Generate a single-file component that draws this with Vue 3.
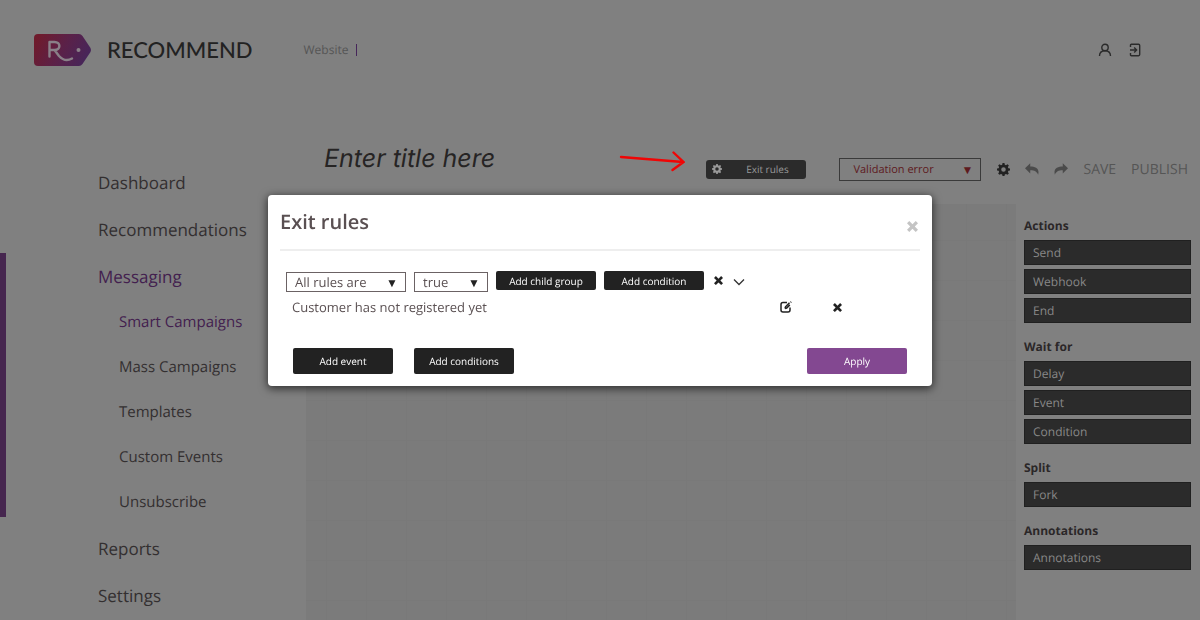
<script setup>
import { ref } from 'vue'

const title = ref('')
const match = ref('All rules are')
const truth = ref('true')
const status = ref('Validation error')

const topLinks = ['Dashboard', 'Recommendations']
const messaging = ['Smart Campaigns', 'Mass Campaigns', 'Templates', 'Custom Events', 'Unsubscribe']
const bottomLinks = ['Reports', 'Settings']

const palette = [
  { name: 'Actions', items: ['Send', 'Webhook', 'End'] },
  { name: 'Wait for', items: ['Delay', 'Event', 'Condition'] },
  { name: 'Split', items: ['Fork'] },
  { name: 'Annotations', items: ['Annotations'] },
]

const gear =
  'M6.8 0h2.4l.4 2.1 1.5.6L12.9 1.5l1.7 1.7-1.2 1.8.6 1.5 2 .4v2.300l-2 .4-.6 1.500 1.200 1.800-1.700 1.700-1.800-1.200-1.500.6-.4 2h-2.400l-.4-2-1.500-.6-1.800 1.200-1.700-1.700 1.200-1.800-.6-1.500-2-.4V6.900l2-.4.6-1.500L1.400 3.200l1.700-1.700 1.800 1.200 1.500-.6zM8 5.200a2.800 2.800 0 1 0 0 5.600 2.800 2.800 0 0 0 0-5.600z'
const cross = 'M2.500 0L6 3.500 9.500 0 12 2.500 8.500 6 12 9.500 9.500 12 6 8.500 2.500 12 0 9.500 3.500 6 0 2.500z'
</script>

<template>
  <div class="page">
    <header class="header">
      <a class="brand" href="#" aria-label="Recommend home">
        <svg class="logo" viewBox="0 0 58 32" aria-hidden="true">
          <defs>
            <linearGradient id="tag" x1="0" y1="0.300" x2="1" y2="0.600">
              <stop offset="0" stop-color="#6f1b2c" />
              <stop offset="0.500" stop-color="#5b2148" />
              <stop offset="1" stop-color="#46265a" />
            </linearGradient>
          </defs>
          <path d="M4 0H45Q47 0 48.500 2L56.500 14Q57.500 16 56.500 18L48.500 30Q47 32 45 32H4Q0 32 0 28V4Q0 0 4 0Z" fill="url(#tag)" />
          <path d="M15.500 22.500V8H20.500C27 8 27 16 20.500 16H15.500M20.500 16L25 22Q31 28.500 38 24.500" fill="none" stroke="#8a8088" stroke-width="2.400" stroke-linecap="round" stroke-linejoin="round" />
          <circle cx="44.500" cy="16" r="2" fill="#8a8088" />
        </svg>
        <span class="wordmark">RECOMMEND</span>
      </a>
      <span class="website">Website</span>
      <nav class="account" aria-label="Account">
        <button type="button" aria-label="Profile">
          <svg viewBox="0 0 14 14" class="line-icon"><circle cx="7" cy="4.500" r="3.200" /><path d="M1.500 13C1.500 9.500 4 7.700 7 7.700S12.500 9.500 12.500 13" /></svg>
        </button>
        <button type="button" aria-label="Sign out">
          <svg viewBox="0 0 14 14" class="line-icon"><path d="M2.500 4V2.200Q2.500 1.300 3.400 1.300H10.600Q11.700 1.300 11.700 2.400V11.600Q11.700 12.700 10.600 12.700H3.400Q2.500 12.700 2.500 11.800V10M2 7H8.500M6.200 4.600L8.600 7L6.200 9.400" /></svg>
        </button>
      </nav>
    </header>

    <div class="body">
      <nav class="sidebar" aria-label="Main">
        <a v-for="l in topLinks" :key="l" class="link" href="#">{{ l }}</a>
        <div class="group">
          <a class="link active" href="#">Messaging</a>
          <a v-for="(l, i) in messaging" :key="l" class="link sub" :class="{ active: i === 0 }" href="#">{{ l }}</a>
        </div>
        <a v-for="l in bottomLinks" :key="l" class="link" href="#">{{ l }}</a>
      </nav>

      <main class="main">
        <div class="toolbar">
          <input v-model="title" class="title" type="text" placeholder="Enter title here" aria-label="Title" />
          <svg class="pointer" viewBox="0 0 66 22" aria-hidden="true"><path d="M2 7L64 12M54.500 2.500L64.500 12L53.500 20" /></svg>
          <button class="exit" type="button">
            <svg viewBox="0 0 16 16" aria-hidden="true"><path :d="gear" fill-rule="evenodd" /></svg>
            <span>Exit rules</span>
          </button>
          <div class="select status">
            <select v-model="status" aria-label="Status"><option>Validation error</option></select>
            <span class="arrow" aria-hidden="true">▼</span>
          </div>
          <button class="tool dark" type="button" aria-label="Preferences"><svg viewBox="0 0 16 16"><path :d="gear" fill-rule="evenodd" /></svg></button>
          <button class="tool" type="button" aria-label="Undo"><svg viewBox="0 0 16 16"><path d="M6 1.500V5C12 5 17 7 15 14.500C13.500 11 11 9.500 6 9.500V13L0 7.200Z" /></svg></button>
          <button class="tool" type="button" aria-label="Redo"><svg viewBox="0 0 16 16"><path d="M10 1.500V5C4 5 -1 7 1 14.500C2.500 11 5 9.500 10 9.500V13L16 7.200Z" /></svg></button>
          <button class="text" type="button">SAVE</button>
          <button class="text" type="button">PUBLISH</button>
        </div>
        <div class="workspace">
          <div class="canvas"></div>
          <aside class="palette">
            <section v-for="g in palette" :key="g.name">
              <h2>{{ g.name }}</h2>
              <button v-for="i in g.items" :key="i" type="button">{{ i }}</button>
            </section>
          </aside>
        </div>
      </main>
    </div>

    <div class="overlay">
      <section class="modal" role="dialog" aria-labelledby="modal-title">
        <div class="modal-head">
          <h1 id="modal-title">Exit rules</h1>
          <button class="icon close" type="button" aria-label="Close"><svg viewBox="0 0 12 12"><path :d="cross" /></svg></button>
        </div>
        <div class="rules">
          <div class="row">
            <div class="select wide">
              <select v-model="match" aria-label="Match"><option>All rules are</option></select>
              <span class="arrow" aria-hidden="true">▼</span>
            </div>
            <div class="select narrow">
              <select v-model="truth" aria-label="Value"><option>true</option></select>
              <span class="arrow" aria-hidden="true">▼</span>
            </div>
            <button class="btn small" type="button">Add child group</button>
            <button class="btn small" type="button">Add condition</button>
            <button class="icon" type="button" aria-label="Remove group"><svg viewBox="0 0 12 12"><path :d="cross" /></svg></button>
            <button class="icon chevron" type="button" aria-label="Collapse"><svg viewBox="0 0 12 12"><path d="M1 3.500L6 8.500L11 3.500" /></svg></button>
          </div>
          <div class="condition">
            <span>Customer has not registered yet</span>
            <button class="icon edit" type="button" aria-label="Edit condition">
              <svg viewBox="0 0 12 12"><path d="M7 1.500H3Q1 1.500 1 3.500V9Q1 11 3 11H8Q10 11 10 9V6.500" /><path d="M5 7.500L5.500 5.800L9.500 1.800M5 7.500L6.700 7L9.800 3.900" /><path d="M10.600 1.400L11.200 .8" /></svg>
            </button>
            <button class="icon" type="button" aria-label="Remove condition"><svg viewBox="0 0 12 12"><path :d="cross" /></svg></button>
          </div>
        </div>
        <div class="actions">
          <button class="btn" type="button">Add event</button>
          <button class="btn" type="button">Add conditions</button>
          <button class="btn apply" type="button">Apply</button>
        </div>
      </section>
    </div>
  </div>
</template>

<style>
body {
  margin: 0;
  background: #808080;
}
</style>

<style scoped>
.page {
  display: flex;
  flex-direction: column;
  height: 100vh;
  overflow: hidden;
  font-family: 'Open Sans', 'Noto Sans', sans-serif;
  color: #332f30;
  text-rendering: geometricPrecision;
}
.page * {
  box-sizing: border-box;
}
button,
input,
select {
  margin: 0;
  padding: 0;
  border: 0;
  background: none;
  font: inherit;
  color: inherit;
  text-rendering: inherit;
}
a {
  color: inherit;
  text-decoration: none;
}
svg {
  display: block;
  fill: currentColor;
}
.header {
  display: flex;
  align-items: center;
  height: 100px;
  padding: 0 58px 0 34px;
  flex: none;
}
.brand {
  display: flex;
  align-items: center;
  gap: 15px;
}
.logo {
  width: 58px;
  height: 32px;
}
.wordmark {
  font-family: Lato, sans-serif;
  font-size: 22px;
  font-weight: 500;
  line-height: 32px;
  color: #222;
}
.website {
  margin-left: 51px;
  padding-right: 8px;
  font-size: 12px;
  line-height: 12px;
  color: #555;
  border-right: 1px solid #46265a;
}
.account {
  display: flex;
  gap: 16px;
  margin-left: auto;
}
.account svg {
  width: 14px;
  height: 14px;
}
.line-icon {
  fill: none;
  stroke: #2b2b2b;
  stroke-width: 1.4;
}
.body {
  display: flex;
  flex: 1;
  min-height: 0;
}
.sidebar {
  width: 306px;
  flex: none;
  padding-top: 59px;
}
.link {
  display: block;
  padding-left: 98px;
  font-size: 17px;
  line-height: 47px;
}
.link.sub {
  padding-left: 119px;
  font-size: 15px;
  line-height: 45px;
}
.link.active {
  color: #43204f;
}
.group {
  position: relative;
}
.group::before {
  content: '';
  position: absolute;
  left: 0;
  top: 0;
  bottom: 8px;
  width: 6px;
  background: #46264f;
}
.main {
  display: flex;
  flex-direction: column;
  flex: 1;
  min-width: 0;
}
.toolbar {
  display: flex;
  align-items: center;
  height: 104px;
  padding: 34px 12px 0 18px;
  flex: none;
}
.title {
  flex: 1;
  min-width: 0;
  height: 36px;
  margin-bottom: 20px;
  font-family: Inter, sans-serif;
  font-size: 25px;
  font-style: italic;
}
.title::placeholder {
  color: #262424;
  opacity: 1;
}
.pointer {
  width: 66px;
  height: 22px;
  margin: 0 21px 16px 0;
  fill: none;
  stroke: #f00505;
  stroke-width: 2.4;
  stroke-linecap: round;
  flex: none;
}
.exit {
  display: flex;
  align-items: center;
  width: 100px;
  height: 19px;
  padding-left: 6px;
  border-radius: 3px;
  background: #2b2b2b;
  color: #999;
  font-size: 10px;
  flex: none;
}
.exit svg {
  width: 10px;
  height: 10px;
}
.exit span {
  flex: 1;
  padding-left: 6px;
}
.select {
  position: relative;
  flex: none;
}
.select select {
  display: block;
  width: 100%;
  height: 20px;
  padding-left: 8px;
  border: 1px solid #6b6264;
  border-radius: 0;
  appearance: none;
  font-size: 13px;
}
.arrow {
  position: absolute;
  right: 8px;
  top: 0;
  font-size: 12px;
  line-height: 22px;
  color: #222;
  pointer-events: none;
}
.select.status {
  width: 142px;
  margin: 0 16px 0 33px;
}
.status select {
  height: 23px;
  padding-left: 13px;
  border-color: #3a3a3a;
  font-size: 11px;
  color: #5e1a1e;
}
.status .arrow {
  line-height: 24px;
  color: #5e1a1e;
}
.tool {
  margin-right: 15px;
  color: #4b4b4b;
}
.tool svg {
  width: 14px;
  height: 14px;
}
.tool.dark {
  color: #222;
}
.tool.dark svg {
  width: 13px;
  height: 13px;
}
.text {
  font-size: 14px;
  color: #555;
}
.text + .text {
  margin-left: 15px;
}
.workspace {
  display: flex;
  flex: 1;
  min-height: 0;
}
.canvas {
  flex: 1;
  background-color: #7b7b7b;
  background-image:
    linear-gradient(to right, #797979 1px, transparent 1px),
    linear-gradient(to bottom, #797979 1px, transparent 1px);
  background-size: 40px 40px;
  background-position: 20px 36px;
}
.palette {
  width: 184px;
  padding: 12px 9px 0 8px;
  flex: none;
}
.palette h2 {
  margin: 0 0 4px;
  font-size: 12px;
  line-height: 20px;
  font-weight: 700;
  color: #2b2728;
}
.palette section {
  margin-bottom: 14px;
}
.palette button {
  display: block;
  width: 100%;
  height: 25px;
  margin-bottom: 4px;
  padding-left: 8px;
  border: 1px solid #202020;
  background: #2b2b2b;
  color: #888;
  font-size: 12px;
  text-align: left;
}
.overlay {
  position: fixed;
  inset: 0;
  display: flex;
  justify-content: center;
  align-items: flex-start;
  padding: 195px 20px 0;
}
.modal {
  width: 664px;
  padding: 0 12px 12px;
  border-radius: 4px;
  background: #fff;
  color: #5a5052;
  box-shadow: 0 2px 9px 1px rgba(0, 0, 0, 0.6);
}
.modal-head {
  display: flex;
  justify-content: space-between;
  align-items: center;
  height: 56px;
  border-bottom: 2px solid #eee;
}
.modal-head h1 {
  margin: 0 0 2px;
  font-size: 20px;
  font-weight: 600;
}
.icon {
  color: #222;
  flex: none;
}
.icon svg {
  width: 9px;
  height: 9px;
}
.close {
  margin: 8px 2px 0 0;
  color: #c4c4c4;
}
.close svg {
  width: 11px;
  height: 11px;
}
.rules {
  padding: 20px 6px 0;
}
.row {
  display: flex;
  align-items: center;
  gap: 8px;
}
.wide {
  width: 120px;
}
.narrow {
  width: 74px;
}
.btn {
  width: 100px;
  height: 26px;
  border-radius: 2px;
  background: #222;
  color: #fff;
  font-size: 10px;
  font-weight: 500;
}
.btn.small {
  height: 19px;
  margin-bottom: 3px;
}
.row .icon {
  margin: 0 2px 4px;
}
.row .chevron {
  margin: 0;
}
.chevron svg {
  width: 12px;
  height: 12px;
  fill: none;
  stroke: #333;
  stroke-width: 1.3;
}
.condition {
  display: flex;
  align-items: center;
  padding: 0 72px 0 6px;
  font-size: 13px;
  line-height: 28px;
}
.condition span {
  flex: 1;
}
.edit {
  margin-right: 41px;
}
.edit svg {
  width: 12px;
  height: 12px;
  fill: none;
  stroke: currentColor;
  stroke-width: 1.5;
}
.actions {
  display: flex;
  gap: 21px;
  padding: 27px 13px 0;
}
.apply {
  margin-left: auto;
  background: #834891;
}
</style>
